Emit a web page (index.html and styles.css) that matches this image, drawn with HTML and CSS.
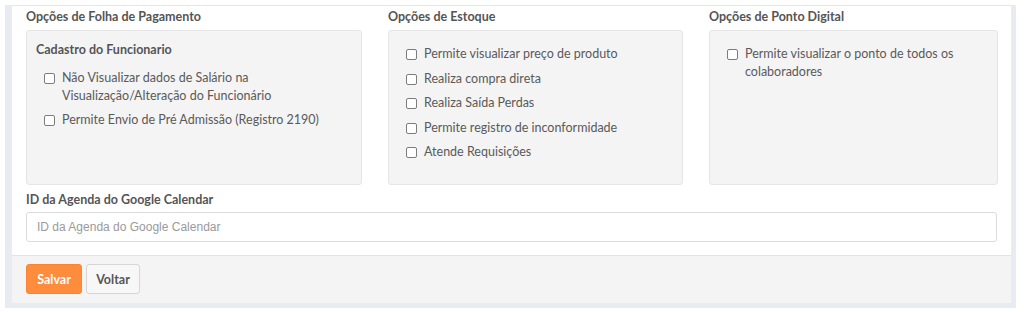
FILE: index.html
```html
<!DOCTYPE html>
<html lang="pt-BR">
<head>
<meta charset="utf-8">
<title>Opções</title>
<link rel="stylesheet" href="styles.css">
</head>
<body>
<div class="wrap">
  <div class="card">
    <div class="card-body">
      <div class="cols">
        <div class="col">
          <div class="sec-title">Opções de Folha de Pagamento</div>
          <div class="panel">
            <div class="panel-title">Cadastro do Funcionario</div>
            <ul class="checks">
              <li><span class="cb"></span><span class="lbl">Não Visualizar dados de Salário na Visualização/Alteração do Funcionário</span></li>
              <li><span class="cb"></span><span class="lbl">Permite Envio de Pré Admissão (Registro 2190)</span></li>
            </ul>
          </div>
        </div>
        <div class="col">
          <div class="sec-title">Opções de Estoque</div>
          <div class="panel">
            <ul class="checks">
              <li><span class="cb"></span><span class="lbl">Permite visualizar preço de produto</span></li>
              <li><span class="cb"></span><span class="lbl">Realiza compra direta</span></li>
              <li><span class="cb"></span><span class="lbl">Realiza Saída Perdas</span></li>
              <li><span class="cb"></span><span class="lbl">Permite registro de inconformidade</span></li>
              <li><span class="cb"></span><span class="lbl">Atende Requisições</span></li>
            </ul>
          </div>
        </div>
        <div class="col">
          <div class="sec-title">Opções de Ponto Digital</div>
          <div class="panel">
            <ul class="checks">
              <li><span class="cb"></span><span class="lbl">Permite visualizar o ponto de todos os colaboradores</span></li>
            </ul>
          </div>
        </div>
      </div>
      <div class="field">
        <label class="field-label" for="gcal">ID da Agenda do Google Calendar</label>
        <input class="input" id="gcal" type="text" placeholder="ID da Agenda do Google Calendar">
      </div>
    </div>
    <div class="card-footer">
      <button class="btn btn-primary" type="button">Salvar</button>
      <button class="btn btn-default" type="button">Voltar</button>
    </div>
  </div>
</div>
</body>
</html>
```

FILE: styles.css
```css
* { box-sizing: border-box; }
html, body { margin: 0; padding: 0; background: #fff; }
body {
  font-family: "Lato", "Open Sans", sans-serif;
  font-size: 12.5px;
  color: #5a5a5a;
}
.wrap {
  width: 1011px;
  margin-left: 5px;
  padding: 0 5px 5px 7px;
  background: #e8ebf0;
}
.card {
  background: #fff;
  border-top: 1px solid #e6e6e6;
  margin-top: 5px;
}
.card-body {
  padding: 2px 14px 13px 14px;
}
.cols {
  display: grid;
  grid-template-columns: 336px 295px 289px;
  column-gap: 26px;
}
.sec-title, .panel-title, .field-label {
  font-weight: 700;
  line-height: 18px;
  color: #555;
}
.sec-title { margin-bottom: 4px; }
.panel {
  background: #f4f4f4;
  border: 1px solid #e6e6e6;
  border-radius: 3px;
  height: 155px;
  padding: 10px 9px;
}
.panel-title { margin-bottom: 6px; }
.checks {
  list-style: none;
  margin: 0;
  padding: 4px 0 0 8px;
}
.checks li {
  display: flex;
  align-items: flex-start;
  gap: 7px;
  line-height: 17.5px;
  margin-bottom: 7px;
}
.cb {
  flex: none;
  width: 11px;
  height: 11px;
  margin-top: 4px;
  border: 1px solid #7d7d7d;
  border-radius: 2px;
  background: #fff;
}
.lbl { color: #5a5a5a; }
.field { margin-top: 6px; }
.field-label { display: block; margin-bottom: 3px; }
.input {
  display: block;
  width: 100%;
  height: 30px;
  border: 1px solid #dcdcdc;
  border-radius: 3px;
  padding: 0 10px;
  font-family: "Liberation Sans", Arial, sans-serif;
  font-size: 12px;
  color: #555;
  background: #fff;
  outline: none;
}
.input::placeholder { color: #9a9a9a; }
.card-footer {
  background: #f4f4f4;
  border-top: 1px solid #e3e3e3;
  padding: 8px 14px 9px 14px;
  display: flex;
  gap: 4px;
}
.btn {
  height: 30px;
  border-radius: 3px;
  font-family: "Lato", "Open Sans", sans-serif;
  font-size: 12.5px;
  font-weight: 700;
  padding: 0;
  cursor: pointer;
}
.btn-primary {
  width: 56px;
  background: #fd8c3c;
  border: 1px solid #f98533;
  color: #fff;
}
.btn-default {
  width: 54px;
  background: #f7f7f7;
  border: 1px solid #d6d6d6;
  color: #555;
}
```
